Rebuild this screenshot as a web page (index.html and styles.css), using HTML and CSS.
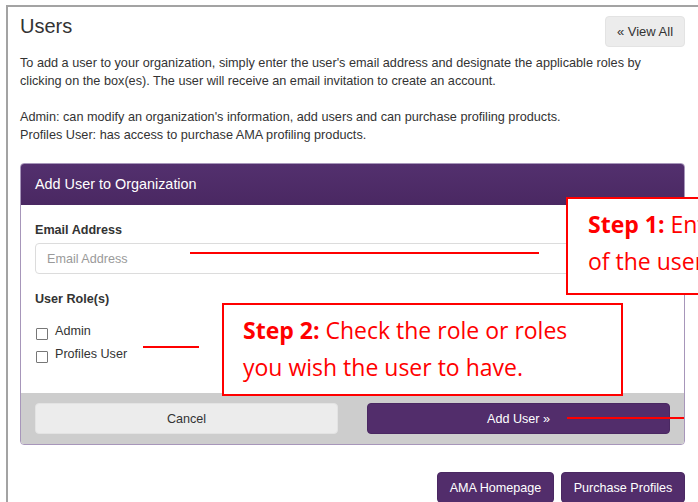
FILE: index.html
```html
<!DOCTYPE html>
<html lang="en">
<head>
<meta charset="utf-8">
<title>Users</title>
<link rel="stylesheet" href="styles.css">
</head>
<body>
<div class="frame">
  <div class="content">
    <div class="title-row">
      <h1>Users</h1>
      <a class="btn btn-default btn-view">&laquo; View All</a>
    </div>
    <p class="intro">To add a user to your organization, simply enter the user's email address and designate the applicable roles by clicking on the box(es). The user will receive an email invitation to create an account.</p>
    <p class="intro">Admin: can modify an organization's information, add users and can purchase profiling products.<br>Profiles User: has access to purchase AMA profiling products.</p>

    <div class="panel">
      <div class="panel-heading">Add User to Organization</div>
      <div class="panel-body">
        <label class="field-label" for="email">Email Address</label>
        <input class="form-control" id="email" type="text" placeholder="Email Address">
        <div class="field-label roles-label">User Role(s)</div>
        <label class="check-row"><input type="checkbox" class="check"><span>Admin</span></label>
        <label class="check-row"><input type="checkbox" class="check"><span>Profiles User</span></label>
      </div>
      <div class="panel-footer">
        <a class="btn btn-default">Cancel</a>
        <a class="btn btn-primary">Add User &raquo;</a>
      </div>
    </div>

    <div class="actions">
      <a class="btn btn-primary btn-home">AMA Homepage</a>
      <a class="btn btn-primary btn-purchase">Purchase Profiles</a>
    </div>
  </div>
</div>

<!-- callouts drawn over the form -->
<div class="callout callout-1"><b>Step 1:</b> Enter the email address<br>of the user you wish to add.</div>
<div class="callout callout-2"><b>Step 2:</b> Check the role or roles<br>you wish the user to have.</div>
<div class="pointer pointer-1"></div>
<div class="pointer pointer-2"></div>
<div class="pointer pointer-3"></div>
</body>
</html>
```
FILE: styles.css
```css
html, body {
  margin: 0;
  padding: 0;
  background: #fff;
  overflow: hidden;
}

body {
  width: 698px;
  height: 502px;
  position: relative;
  font-family: "Liberation Sans", Arial, sans-serif;
  font-size: 12.6px;
  line-height: 18px;
  color: #333;
}

.frame {
  margin: 5px 0 0 6px;
  border-top: 2px solid #a3a3a3;
  border-left: 2px solid #a3a3a3;
  height: 600px;
}

.content {
  width: 665px;
  margin-left: 12px;
}

.title-row {
  display: flex;
  justify-content: space-between;
  align-items: flex-start;
  height: 47px;
}

h1 {
  margin: 8px 0 0 0;
  font-size: 20px;
  line-height: 22px;
  font-weight: normal;
  color: #333;
}

.intro {
  margin: 0;
  max-width: 650px;
  font-size: 12.7px;
}

.intro + .intro {
  margin-top: 18px;
}

.btn {
  display: flex;
  align-items: center;
  justify-content: center;
  height: 31px;
  box-sizing: border-box;
  border-radius: 4px;
  font-size: 12.6px;
  text-decoration: none;
  white-space: nowrap;
}

.btn-default {
  background: #ececec;
  color: #333;
  border: 1px solid #e3e3e3;
}

.btn-primary {
  background: #522d6b;
  color: #fff;
  border: 1px solid #4a2862;
}

.btn-view {
  margin-top: 9px;
  width: 80px;
  font-size: 13px;
}

/* panel */
.panel {
  margin-top: 19px;
  border: 1px solid #a796ba;
  border-radius: 4px;
  overflow: hidden;
}

.panel-heading {
  height: 41px;
  line-height: 41px;
  padding: 0 14px;
  background: linear-gradient(#53306e, #4a2862);
  color: #fff;
  font-size: 14.4px;
}

.panel-body {
  padding: 16px 14px 30px 14px;
  background: #fff;
}

.field-label {
  display: block;
  font-weight: bold;
  color: #333;
}

.form-control {
  display: block;
  box-sizing: border-box;
  width: 100%;
  height: 31px;
  margin: 4px 0 0 0;
  padding: 0 11px;
  border: 1px solid #dcdcdc;
  border-radius: 4px;
  font-family: inherit;
  font-size: 12.6px;
  color: #333;
  outline: none;
}

.form-control::placeholder {
  color: #9a9a9a;
}

.roles-label {
  margin-top: 16px;
}

.check-row {
  display: flex;
  align-items: flex-start;
  gap: 7px;
  margin-top: 5px;
  color: #333;
}

.roles-label + .check-row {
  margin-top: 14px;
}

.check {
  appearance: none;
  -webkit-appearance: none;
  width: 12px;
  height: 12px;
  margin: 6px 0 0 1px;
  border: 1px solid #777;
  border-radius: 1px;
  background: #fff;
  box-sizing: border-box;
}

.panel-footer {
  display: grid;
  grid-template-columns: 1fr 1fr;
  gap: 29px;
  padding: 10px 14px;
  background: #cdcdcd;
}

.actions {
  display: flex;
  justify-content: flex-end;
  gap: 7px;
  margin-top: 27px;
}

.btn-home { width: 117px; }
.btn-purchase { width: 124px; }

/* red callouts */
.callout {
  position: absolute;
  box-sizing: border-box;
  border: 2px solid #ff0000;
  background: #fff;
  color: #ff0000;
  font-family: "Open Sans", Lato, sans-serif;
  font-size: 23px;
  line-height: 37px;
  padding: 7px 0 0 19px;
  white-space: nowrap;
}

.callout b {
  font-weight: bold;
}

.callout-1 {
  left: 566px;
  top: 197px;
  width: 380px;
  height: 98px;
  padding-left: 20px;
}

.callout-2 {
  left: 222px;
  top: 303px;
  width: 401px;
  height: 93px;
}

.pointer {
  position: absolute;
  height: 2px;
  background: #ff0000;
}

.pointer-1 { left: 190px; top: 252px; width: 349px; }
.pointer-2 { left: 143px; top: 346px; width: 56px; }
.pointer-3 { left: 567px; top: 417px; width: 117px; }
```
